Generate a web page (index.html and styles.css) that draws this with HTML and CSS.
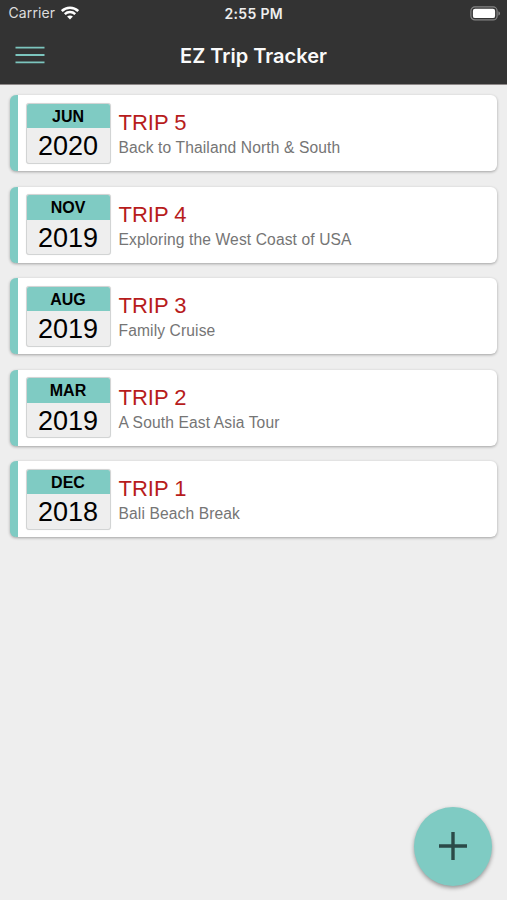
FILE: index.html
```html
<!DOCTYPE html>
<html lang="en">
<head>
<meta charset="utf-8">
<title>EZ Trip Tracker</title>
<link rel="stylesheet" href="styles.css">
</head>
<body>
<header class="header">
  <div class="status">
    <div class="carrier"><span class="carrier-name">Carrier</span>
      <svg class="wifi" width="18" height="14" viewBox="0 0 18 14" fill="none" stroke="#fff" stroke-width="2.5"><path d="M.8 5C5.3.6 12.7.6 17.2 5M3.8 8.1c2.9-2.7 7.5-2.7 10.4 0"/><path d="M6.1 10.5c1.7-1.4 4.1-1.4 5.8 0L9 13.5z" fill="#fff" stroke="none"/></svg>
    </div>
    <time class="clock">2:55 PM</time>
    <svg class="battery" width="31" height="15" viewBox="0 0 31 15"><rect x=".9" y=".9" width="26.2" height="13" rx="4" fill="none" stroke="#858585" stroke-width="1.2"/><rect x="2.9" y="2.7" width="22.2" height="9.4" rx="2.2" fill="#fff"/><path d="M28.4 5.2c2.2.8 2.2 3.6 0 4.4z" fill="#858585"/></svg>
  </div>
  <nav class="nav">
    <svg class="menu" width="30" height="18" viewBox="0 0 30 18" stroke="#7cc5be" stroke-width="1.9"><path d="M.5 1.6h29M.5 9h29M.5 16.4h29"/></svg>
    <h1 class="title">EZ Trip Tracker</h1>
  </nav>
</header>
<main class="trips">
  <article class="card"><div class="date"><div class="month">JUN</div><div class="year">2020</div></div><div class="info"><h2 class="name">TRIP 5</h2><p class="desc">Back to Thailand North &amp; South</p></div></article>
  <article class="card"><div class="date"><div class="month">NOV</div><div class="year">2019</div></div><div class="info"><h2 class="name">TRIP 4</h2><p class="desc">Exploring the West Coast of USA</p></div></article>
  <article class="card"><div class="date"><div class="month">AUG</div><div class="year">2019</div></div><div class="info"><h2 class="name">TRIP 3</h2><p class="desc">Family Cruise</p></div></article>
  <article class="card"><div class="date"><div class="month">MAR</div><div class="year">2019</div></div><div class="info"><h2 class="name">TRIP 2</h2><p class="desc">A South East Asia Tour</p></div></article>
  <article class="card"><div class="date"><div class="month">DEC</div><div class="year">2018</div></div><div class="info"><h2 class="name">TRIP 1</h2><p class="desc">Bali Beach Break</p></div></article>
</main>
<button class="add" aria-label="Add trip"><svg width="28" height="28" viewBox="0 0 28 28" stroke="#2b4a48" stroke-width="3.4"><path d="M14 0v28M0 14h28"/></svg></button>
</body>
</html>
```
FILE: styles.css
```css
* { box-sizing: border-box; margin: 0; padding: 0; }
body {
  height: 900px;
  overflow: hidden;
  background: #eee;
  font-family: "Liberation Sans", Arial, sans-serif;
}
.header {
  height: 85px;
  background: #333;
  border-bottom: 1px solid #8d8888;
  color: #fff;
  font-family: Inter, sans-serif;
}
.status {
  display: grid;
  grid-template-columns: 1fr auto 1fr;
  align-items: center;
  height: 26px;
  padding: 0 6px 0 8.5px;
}
.carrier { display: flex; align-items: center; gap: 6px; }
.carrier-name { font-size: 14px; line-height: 26px; color: #ddd; letter-spacing: .1px; }
.clock { margin-left: -2px; font-size: 14px; font-weight: 600; letter-spacing: .35px; color: #eee; }
.battery { justify-self: end; }
.nav {
  display: grid;
  grid-template-columns: 1fr auto 1fr;
  align-items: center;
  height: 58px;
  padding: 0 15px;
}
.title { padding-top: 2px; font-size: 20px; font-weight: 600; line-height: 28px; color: #fafafa; }
.trips {
  display: flex;
  flex-direction: column;
  gap: 15.6px;
  padding: 10px 10px 0 10px;
}
.card {
  display: flex;
  height: 76px;
  padding: 7.6px 8px 7px 7.5px;
  border-left: 8px solid #7fcbc3;
  border-radius: 6px;
  background: #fff;
  box-shadow: 0 1px 3px rgba(0, 0, 0, .32);
}
.date {
  width: 85px;
  height: 61px;
  border: 1px solid #d2d4d4;
  border-radius: 3px;
  background: #eee;
  box-shadow: 0 0 1px rgba(0, 0, 0, .15);
  text-align: center;
  color: #000;
  overflow: hidden;
}
.month { height: 24.4px; background: #7fcbc3; font-size: 16px; font-weight: 700; line-height: 26px; }
.year { font-size: 27px; line-height: 36px; }
.info { padding: 7.4px 0 0 8px; }
.name { font-size: 22px; font-weight: 400; line-height: 26px; color: #b71c1c; }
.desc { font-size: 15.6px; line-height: 23px; letter-spacing: .12px; color: #757575; }
.add {
  position: absolute;
  left: 414px;
  top: 807px;
  display: flex;
  align-items: center;
  justify-content: center;
  width: 78px;
  height: 79px;
  padding-bottom: 1px;
  border: 0;
  border-radius: 50%;
  background: #7fcbc3;
  box-shadow: 0 2px 4px rgba(0, 0, 0, .38);
}
```
